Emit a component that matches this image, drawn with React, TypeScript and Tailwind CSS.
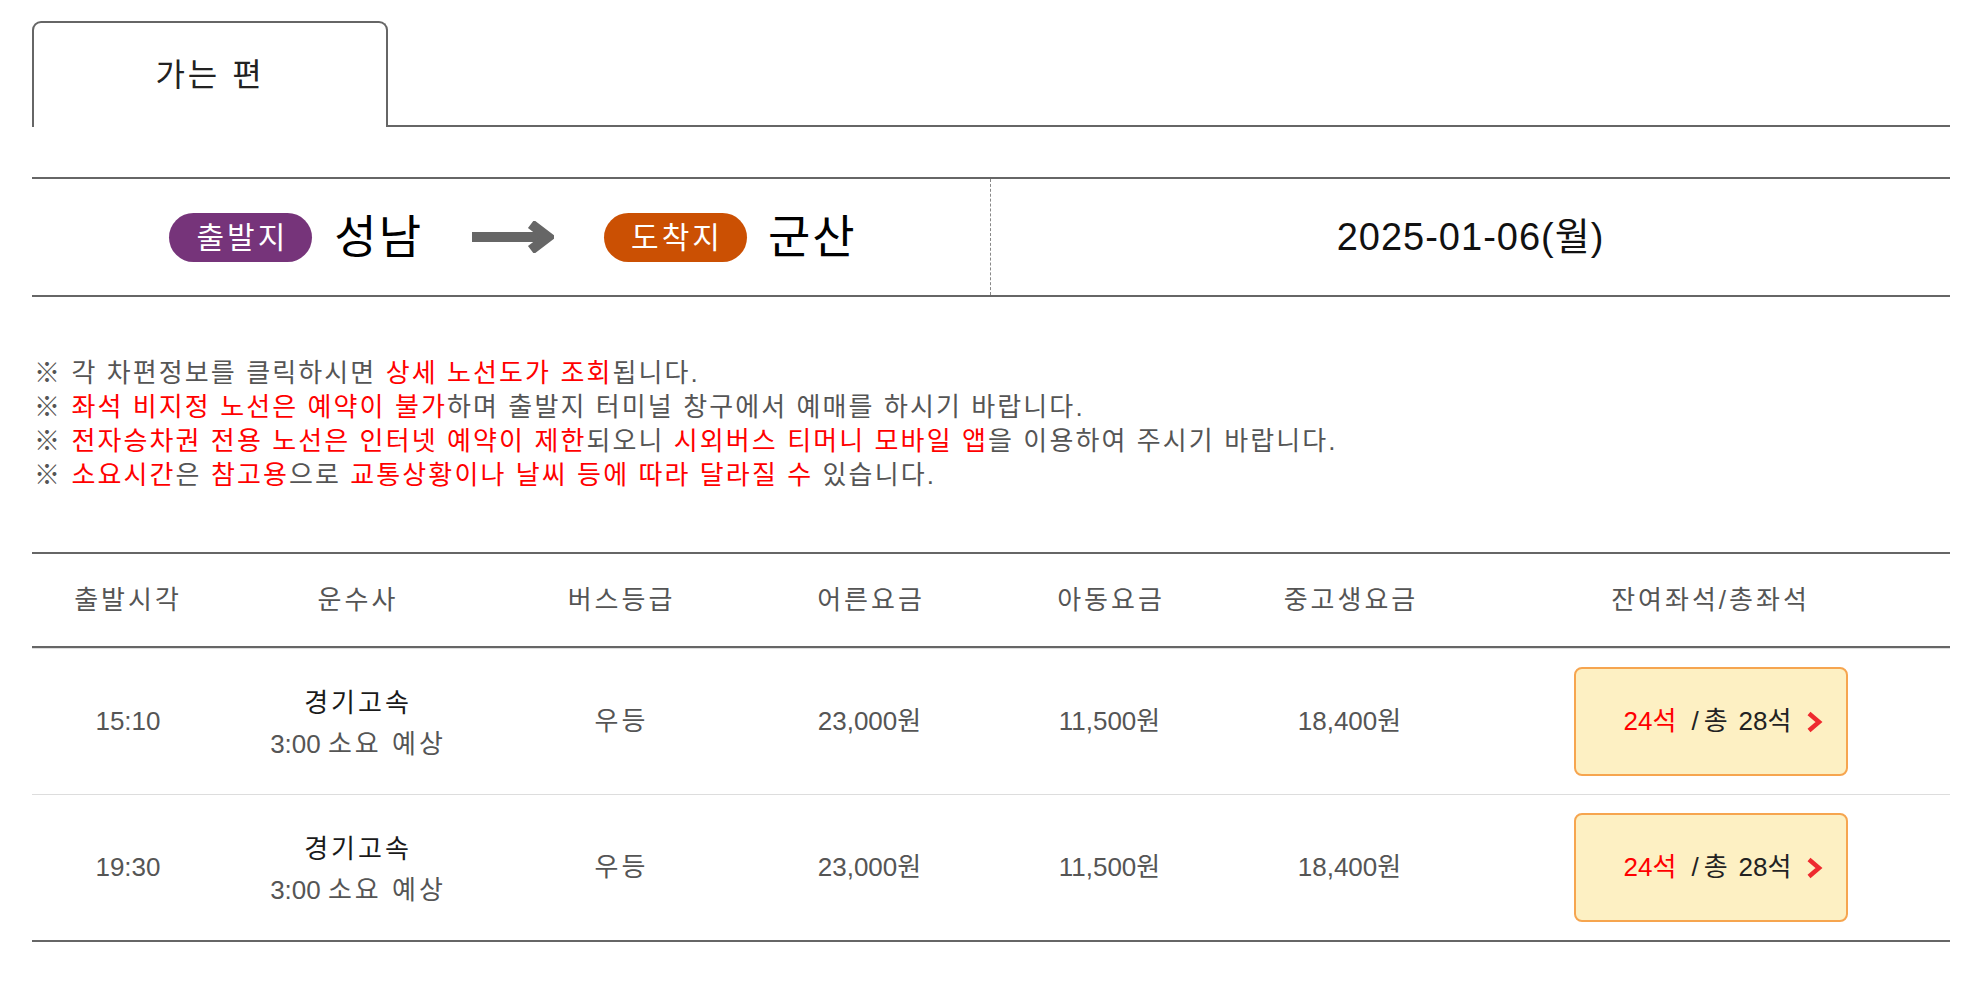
import React from "react";

const FONT = "font-['Liberation_Sans','Noto_Sans_CJK_KR',sans-serif]";

function Arrow() {
  return (
    <svg width="82" height="32" viewBox="0 0 82 32" className="shrink-0">
      <line x1="0" y1="16" x2="72" y2="16" stroke="#666" strokeWidth="10" />
      <polyline points="59,3 76,16 59,29" fill="none" stroke="#666" strokeWidth="10" strokeLinejoin="miter" />
    </svg>
  );
}

function Chevron() {
  return (
    <svg width="17" height="22" viewBox="0 0 17 22" className="shrink-0">
      <polyline points="3,2.5 13,11 3,19.5" fill="none" stroke="#ee2a2f" strokeWidth="4.5" />
    </svg>
  );
}

const R = ({ children }: { children: React.ReactNode }) => <span className="text-[#ff0000]">{children}</span>;
const K = ({ children, className = "" }: { children: React.ReactNode; className?: string }) => (
  <span className={`tracking-[3px] ${className}`}>{children}</span>
);

const rows = [{ time: "15:10" }, { time: "19:30" }];

const COLS = "grid grid-cols-[192px_268px_259px_240px_240px_240px_1fr]";

export default function App() {
  return (
    <div className={`${FONT} w-[1983px] min-h-[986px] bg-white pt-[21px]`}>
      <div className="ml-[32px] w-[1918px]">
        {/* Tab */}
        <div className="flex h-[106px]">
          <div className="w-[356px] border-2 border-b-0 border-[#666] rounded-t-[9px] flex items-center justify-center text-[32px] tracking-[3px] text-[#222]">
            가는 편
          </div>
          <div className="flex-1 border-b-2 border-[#666]" />
        </div>

        {/* Route */}
        <div className="mt-[50px] h-[120px] border-y-2 border-[#666] flex">
          <div className="w-[958px] flex items-center justify-center pl-[4px]">
            <span className="w-[143px] h-[49px] rounded-full bg-[#76347a] text-white text-[30px] tracking-[3px] pl-[3px] flex items-center justify-center">출발지</span>
            <span className="ml-[22px] text-[46px] tracking-[2px] text-black leading-none">성남</span>
            <span className="ml-[49px] mr-[50px] flex items-center"><Arrow /></span>
            <span className="w-[143px] h-[49px] rounded-full bg-[#cb5003] text-white text-[30px] tracking-[3px] pl-[3px] flex items-center justify-center">도착지</span>
            <span className="ml-[21px] text-[46px] tracking-[2px] text-black leading-none">군산</span>
          </div>
          <div className="flex-1 border-l border-dashed border-[#888] flex items-center justify-center text-[38px] tracking-[1px] text-[#111]">
            2025-01-06(월)
          </div>
        </div>

        {/* Notes */}
        <div className="mt-[59px] text-[26px] leading-[34px] tracking-[2.1px] text-[#555] pl-[2px]">
          <p>※ 각 차편정보를 클릭하시면 <R>상세 노선도가 조회</R>됩니다.</p>
          <p>※ <R>좌석 비지정 노선은 예약이 불가</R>하며 출발지 터미널 창구에서 예매를 하시기 바랍니다.</p>
          <p>※ <R>전자승차권 전용 노선은 인터넷 예약이 제한</R>되오니 <R>시외버스 티머니 모바일 앱</R>을 이용하여 주시기 바랍니다.</p>
          <p>※ <R>소요시간</R>은 <R>참고용</R>으로 <R>교통상황이나 날씨 등에 따라 달라질 수</R> 있습니다.</p>
        </div>

        {/* Table */}
        <div className="mt-[60px] border-t-2 border-b-2 border-[#666] text-[26px]">
          <div className={`${COLS} h-[94px] items-center text-center text-[#555] tracking-[3px] border-b-2 border-[#666]`}>
            <div>출발시각</div>
            <div>운수사</div>
            <div>버스등급</div>
            <div>어른요금</div>
            <div>아동요금</div>
            <div>중고생요금</div>
            <div>잔여좌석/총좌석</div>
          </div>
          {rows.map((r, i) => (
            <div key={i} className={`${COLS} h-[146px] items-center text-center text-[#555] border-t border-[#ddd]`}>
              <div>{r.time}</div>
              <div className="flex flex-col items-center leading-[41px] pt-[4px]">
                <K className="text-[#1a1a1a]">경기고속</K>
                <span>
                  3:00 <K>소요 예상</K>
                </span>
              </div>
              <div>
                <K>우등</K>
              </div>
              <div>
                23,000<K>원</K>
              </div>
              <div>
                11,500<K>원</K>
              </div>
              <div>
                18,400<K>원</K>
              </div>
              <div className="flex justify-center">
                <div className="w-[274px] h-[109px] rounded-[8px] border-2 border-[#f6a54f] bg-[#fdf0c3] flex items-center justify-center pl-[26px]">
                  <span className="text-[#ff0000]">
                    24<K>석</K>
                  </span>
                  <span className="ml-[12px] text-[#222] flex items-center">
                    <span>/</span>
                    <K className="ml-[5px]">총</K>
                    <span className="ml-[8px]">28</span>
                    <K>석</K>
                  </span>
                  <span className="ml-[12px] flex items-center">
                    <Chevron />
                  </span>
                </div>
              </div>
            </div>
          ))}
        </div>
      </div>
    </div>
  );
}
